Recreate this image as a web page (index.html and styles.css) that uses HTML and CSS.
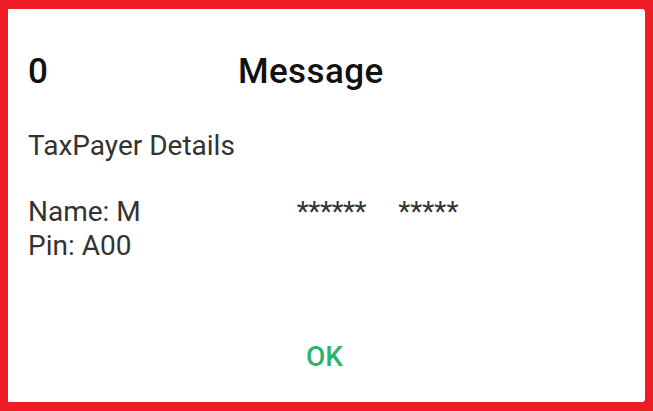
FILE: index.html
```html
<!DOCTYPE html>
<html>
<head>
<meta charset="utf-8">
<link rel="stylesheet" href="styles.css">
</head>
<body>
<div class="frame">
  <div class="dialog">
    <h1 class="title"><span>0</span><span class="redact title-gap"></span><span class="title-word">Message</span></h1>
    <p class="subtitle">TaxPayer Details</p>
    <div class="details">
      <div class="line"><span>Name: M</span><span class="redact name-gap"></span><span class="stars">******</span><span class="redact star-gap"></span><span>*****</span></div>
      <div class="line"><span>Pin: A00</span></div>
    </div>
    <div class="actions"><button class="ok">OK</button></div>
  </div>
</div>
</body>
</html>
```
FILE: styles.css
```css
* { box-sizing: border-box; }
html, body { margin: 0; padding: 0; }
body {
  width: 653px;
  height: 411px;
  font-family: Roboto, "Liberation Sans", sans-serif;
  background: #ee1c25;
  overflow: hidden;
}
.frame {
  width: 653px;
  height: 411px;
  padding: 9px 8px 9px 8px;
}
.dialog {
  width: 100%;
  height: 100%;
  background: #ffffff;
  border-radius: 0 3px 3px 0;
  padding: 43px 20px 0 20px;
  display: flex;
  flex-direction: column;
}
.title {
  margin: 0;
  font-size: 35px;
  line-height: 40px;
  font-weight: 500;
  color: #111111;
  white-space: nowrap;
}
.title-word { letter-spacing: 0.4px; }
.redact { display: inline-block; }
.title-gap { width: 190px; }
.subtitle {
  margin: 37px 0 0 0;
  font-size: 28px;
  line-height: 34px;
  color: #333333;
}
.details {
  margin-top: 32px;
  font-size: 28px;
  line-height: 34px;
  color: #333333;
}
.line { white-space: nowrap; }
.name-gap { width: 156px; }
.stars { letter-spacing: -0.5px; }
.star-gap { width: 32px; }
.actions {
  margin-top: 77px;
  display: flex;
  justify-content: center;
}
.ok {
  border: 0;
  background: transparent;
  padding: 0;
  margin-left: -4px;
  font-family: Roboto, "Liberation Sans", sans-serif;
  font-size: 28px;
  line-height: 34px;
  font-weight: 500;
  color: #2bb56b;
}
```
